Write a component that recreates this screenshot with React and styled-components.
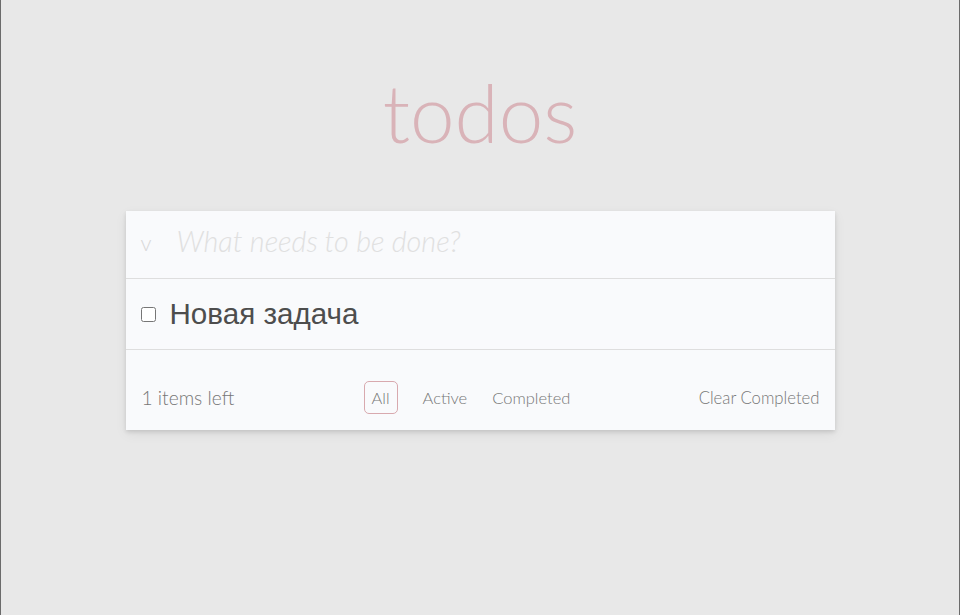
import React, { useState } from 'react';
import styled, { createGlobalStyle } from 'styled-components';

const GlobalStyle = createGlobalStyle`
  html, body {
    margin: 0;
    padding: 0;
    background: #e8e8e8;
  }
  * {
    box-sizing: border-box;
  }
`;

function App() {
  const [todos, setTodos] = useState([{ id: 1, text: 'Новая задача', done: false }]);
  const [filter, setFilter] = useState('all');

  const toggle = (id) =>
    setTodos(todos.map((t) => (t.id === id ? { ...t, done: !t.done } : t)));

  const left = todos.filter((t) => !t.done).length;

  return (
    <Page>
      <GlobalStyle />
      <Title>todos</Title>
      <Card>
        <InputRow>
          <ToggleAll>v</ToggleAll>
          <NewTodo placeholder="What needs to be done?" />
        </InputRow>
        {todos.map((todo) => (
          <TodoRow key={todo.id}>
            <Check type="checkbox" checked={todo.done} onChange={() => toggle(todo.id)} />
            <TodoText>{todo.text}</TodoText>
          </TodoRow>
        ))}
        <Footer>
          <Count>{left} items left</Count>
          <Filters>
            <FilterButton $active={filter === 'all'} onClick={() => setFilter('all')}>All</FilterButton>
            <FilterButton $active={filter === 'active'} onClick={() => setFilter('active')}>Active</FilterButton>
            <FilterButton $active={filter === 'completed'} onClick={() => setFilter('completed')}>Completed</FilterButton>
          </Filters>
          <ClearButton>Clear Completed</ClearButton>
        </Footer>
      </Card>
    </Page>
  );
}

const Page = styled.div`
  min-height: 100vh;
  border-left: 1px solid #6b6b6b;
  border-right: 1px solid #6b6b6b;
  display: flex;
  flex-direction: column;
  align-items: center;
  font-family: Lato, "Open Sans", sans-serif;
`;

const Title = styled.h1`
  margin: 64px 0 0;
  height: 147px;
  font-size: 80px;
  font-weight: 300;
  line-height: 96px;
  color: #d9b3b8;
  text-align: center;
`;

const Card = styled.div`
  width: 709px;
  background: #f9fafc;
  box-shadow: 0 2px 4px rgba(0, 0, 0, 0.12), 0 4px 12px rgba(0, 0, 0, 0.06);
`;

const InputRow = styled.div`
  display: flex;
  align-items: center;
  height: 68px;
  border-bottom: 1px solid #dedede;
  padding: 0 0 7px 15px;
`;

const ToggleAll = styled.span`
  width: 36px;
  font-size: 22px;
  font-weight: 300;
  color: #d8d8d8;
  margin-top: 3px;
`;

const NewTodo = styled.input`
  flex: 1;
  border: none;
  outline: none;
  background: transparent;
  font-family: Lato, sans-serif;
  font-size: 28.8px;
  font-style: italic;
  font-weight: 300;
  color: #4d4d4d;
  padding: 0;

  &::placeholder {
    color: #e0e0e0;
  }
`;

const TodoRow = styled.div`
  display: flex;
  align-items: center;
  height: 71px;
  border-bottom: 1px solid #dedede;
  padding-left: 15px;
`;

const Check = styled.input`
  margin: 0 14px 0 0;
  width: 15px;
  height: 15px;
`;

const TodoText = styled.span`
  font-family: "Liberation Sans", Arial, sans-serif;
  font-size: 29.6px;
  color: #4d4d4d;
`;

const Footer = styled.div`
  display: flex;
  align-items: center;
  justify-content: space-between;
  padding: 31px 15px 16px 16px;
  color: #777;
`;

const Count = styled.span`
  font-size: 19.2px;
  font-weight: 300;
  width: 222px;
`;

const Filters = styled.div`
  display: flex;
  align-items: center;
  gap: 9px;
  flex: 1;
`;

const FilterButton = styled.button`
  height: 33px;
  padding: 0 7px;
  margin-right: ${(p) => (p.$active ? '8px' : '0')};
  border: 1px solid ${(p) => (p.$active ? '#d8a9ae' : 'transparent')};
  border-radius: 5px;
  background: transparent;
  font-family: Lato, sans-serif;
  font-size: 16.5px;
  font-weight: 300;
  color: #777;
  cursor: pointer;
`;

const ClearButton = styled.button`
  border: none;
  background: transparent;
  padding: 0;
  font-family: Lato, sans-serif;
  font-size: 16.7px;
  font-weight: 300;
  color: #777;
  cursor: pointer;
`;

export default App;
